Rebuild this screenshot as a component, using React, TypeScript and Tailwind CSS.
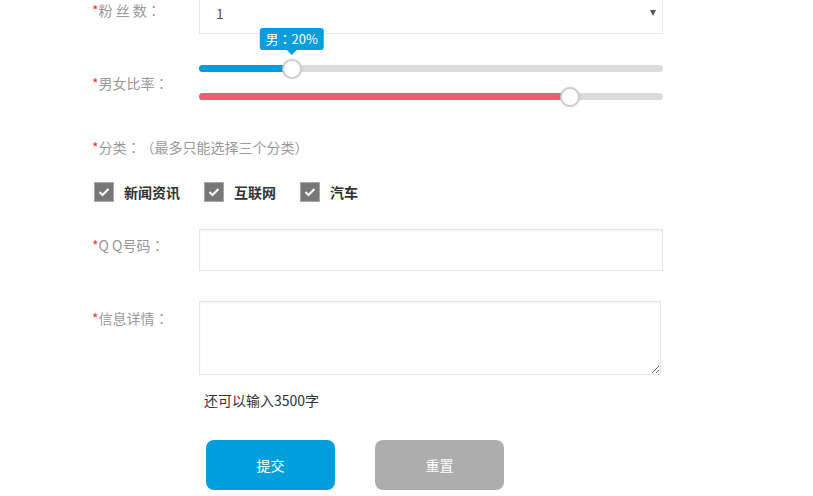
import React from 'react';

const font = "font-['Microsoft_YaHei','Noto_Sans_CJK_SC',sans-serif]";
// full-width punctuation centred, as in the reference
const punct = "font-['Noto_Sans_CJK_TC',sans-serif]";

// slider values (percent)
const male = 20;
const female = 80;

const P: React.FC<{ c: string }> = ({ c }) => <span className={punct}>{c}</span>;

const Label: React.FC<{ text: string; className?: string }> = ({ text, className = '' }) => (
  <div className={`w-[107px] shrink-0 text-[14px] leading-[20px] text-[#999] ${className}`}>
    <span className="text-[#f33]">*</span>
    {text}
    <P c="：" />
  </div>
);

const Track: React.FC<{ value: number; color: string; tip?: React.ReactNode }> = ({ value, color, tip }) => (
  <div className="relative h-[7px] w-[464px] rounded-full bg-[#dcdcdc]">
    <div className={`h-full rounded-full ${color}`} style={{ width: `${value}%` }} />
    <div
      className="absolute top-1/2 h-[20px] w-[20px] -translate-x-1/2 -translate-y-1/2 rounded-full border-2 border-[#cfcfcf] bg-white shadow-[0_0_2px_rgba(0,0,0,0.15)]"
      style={{ left: `${value}%` }}
    />
    {tip && (
      <div
        className="absolute bottom-[17px] -translate-x-1/2 flex flex-col items-center"
        style={{ left: `${value}%` }}
      >
        <div className="h-[22px] whitespace-nowrap rounded-[3px] bg-[#0a9cdb] px-[6px] text-[13px] leading-[22px] text-white">
          {tip}
        </div>
        <div className="h-0 w-0 border-x-[5px] border-t-[5px] border-x-transparent border-t-[#0a9cdb]" />
      </div>
    )}
  </div>
);

const Check: React.FC<{ text: string }> = ({ text }) => (
  <label className="flex items-center gap-[10px]">
    <span className="flex h-[20px] w-[20px] items-center justify-center border border-[#a8a8a8] bg-[#777]">
      <svg width="12" height="10" viewBox="0 0 12 10">
        <polyline points="1.5,5 4.5,8 10.5,2" fill="none" stroke="white" strokeWidth="2" />
      </svg>
    </span>
    <span className="text-[14px] font-bold leading-[20px] text-[#333]">{text}</span>
  </label>
);

export default function App() {
  return (
    <div className={`h-[496px] w-[813px] overflow-hidden bg-white [text-spacing-trim:space-all] ${font}`}>
      <div className="-mt-[8px] pl-[92px]">
        {/* 粉丝数 */}
        <div className="flex items-center">
          <Label text="粉 丝 数" className="-mt-[7px]" />
          <div className="relative flex h-[42px] w-[464px] items-center border border-[#e6e6e6] pl-[16px] text-[14px] text-[#555]">
            1
            <span className="absolute right-[6px] top-[17px] h-0 w-0 border-x-[3.5px] border-t-[6px] border-x-transparent border-t-[#555]" />
          </div>
        </div>

        {/* 男女比率 */}
        <div className="mt-[31px] flex items-center">
          <Label text="男女比率" />
          <div className="flex flex-col gap-[21px]">
            <Track
              value={male}
              color="bg-[#049ddb]"
              tip={
                <>
                  男<P c="：" />
                  {male}%
                </>
              }
            />
            <Track value={female} color="bg-[#f55b72]" />
          </div>
        </div>

        {/* 分类 */}
        <div className="mt-[37px] text-[14px] leading-[20px] text-[#999]">
          <span className="text-[#f33]">*</span>分类<P c="：（" />最多只能选择三个分类<P c="）" />
        </div>
        <div className="ml-[2px] mt-[25px] flex items-center gap-[24px]">
          <Check text="新闻资讯" />
          <Check text="互联网" />
          <Check text="汽车" />
        </div>

        {/* QQ号码 */}
        <div className="mt-[27px] flex items-start">
          <Label text="Q Q号码" className="pt-[6px]" />
          <input className="h-[42px] w-[464px] border border-[#e6e6e6] shadow-[inset_0_1px_2px_rgba(0,0,0,0.05)] outline-none" />
        </div>

        {/* 信息详情 */}
        <div className="mt-[30px] flex items-start">
          <Label text="信息详情" className="pt-[7px]" />
          <textarea className="h-[74px] w-[462px] border border-[#e6e6e6] shadow-[inset_0_1px_2px_rgba(0,0,0,0.05)] outline-none" />
        </div>

        <div className="ml-[112px] mt-[15px] text-[14px] leading-[20px] text-[#333]">还可以输入3500字</div>

        <div className="ml-[114px] mt-[30px] flex gap-[40px]">
          <button className="h-[50px] w-[129px] rounded-[8px] bg-[#009fdb] text-[14px] text-white">提交</button>
          <button className="h-[50px] w-[129px] rounded-[8px] bg-[#adadad] text-[14px] text-white">重置</button>
        </div>
      </div>
    </div>
  );
}
